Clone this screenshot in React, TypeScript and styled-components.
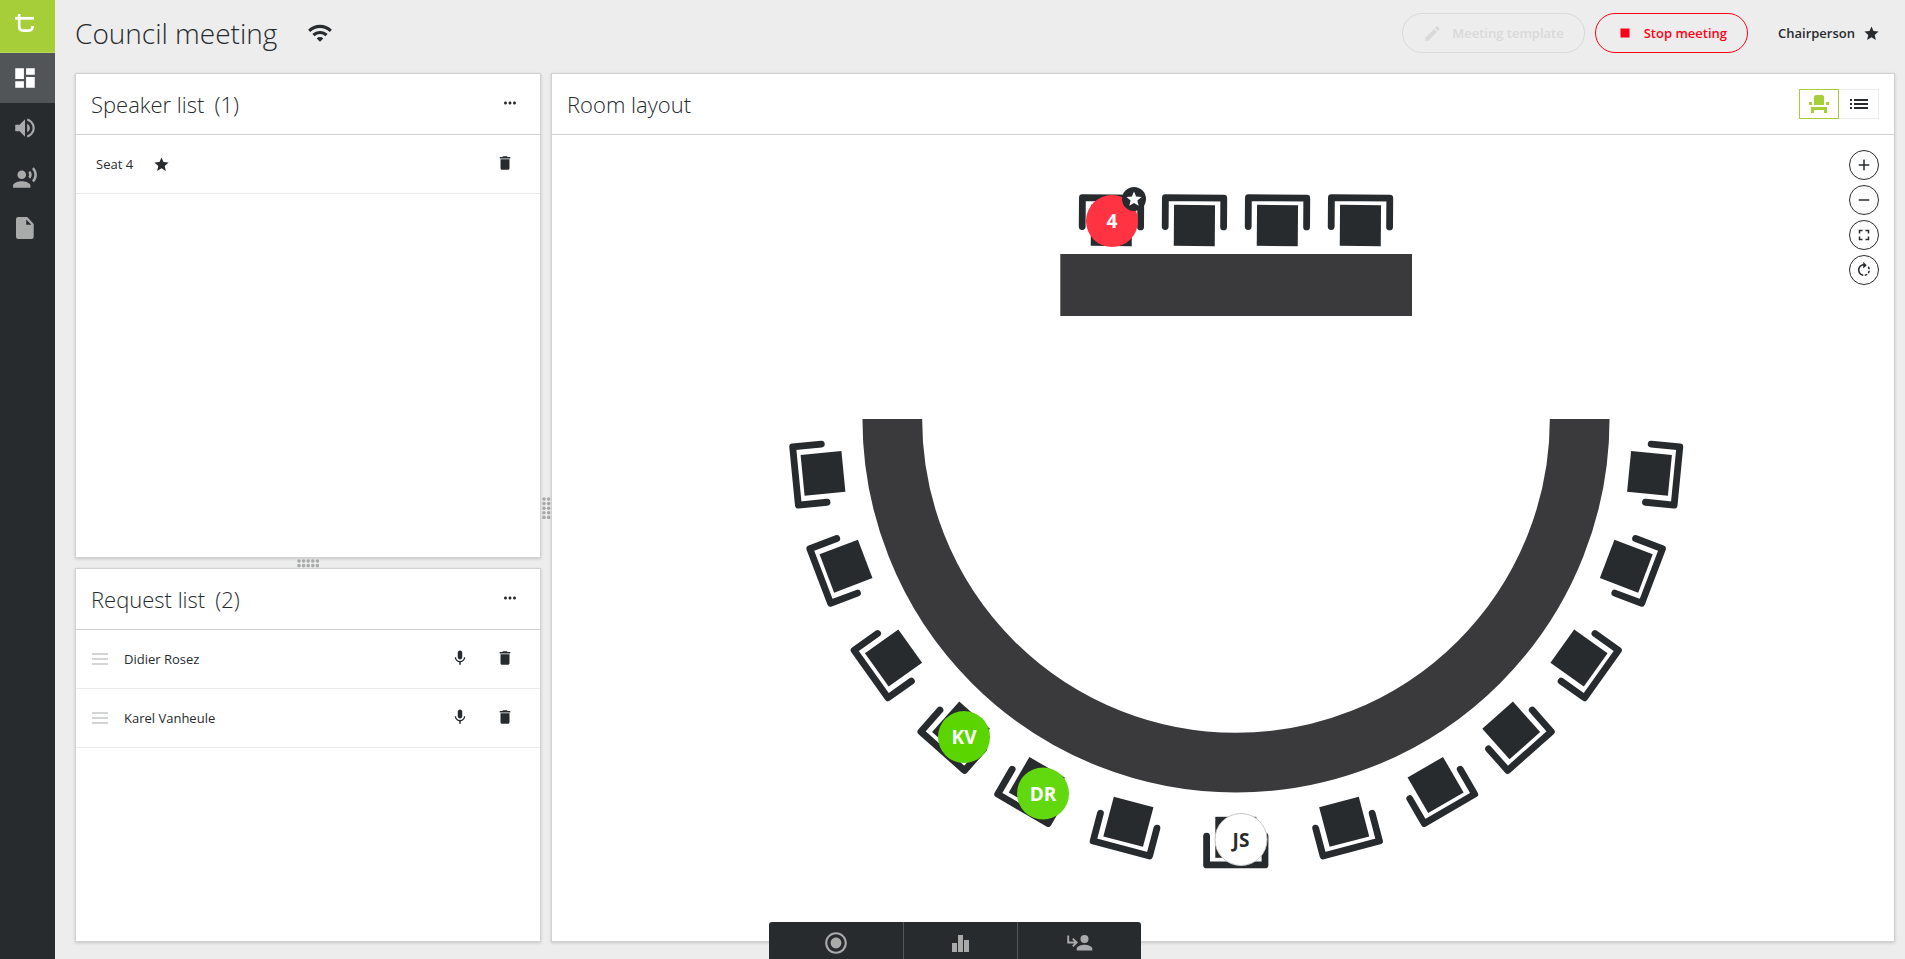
import React from "react";
import styled, { createGlobalStyle } from "styled-components";
import {
  MdAdd,
  MdDashboard,
  MdDelete,
  MdEdit,
  MdEventSeat,
  MdFullscreen,
  MdList,
  MdMic,
  MdMoreHoriz,
  MdRadioButtonChecked,
  MdRecordVoiceOver,
  MdRemove,
  MdRotateRight,
  MdStar,
  MdStop,
  MdVolumeUp,
  MdWifi,
} from "react-icons/md";

const ink = "#272b2e";
const line = "#d0d1d1";
const faint = "#ebebeb";
const green = "#a6ce39";
const red = "#ff0014";

const GlobalStyle = createGlobalStyle`
  * { box-sizing: border-box; }
  body {
    margin: 0;
    background: #ededed;
    color: ${ink};
    font-family: "Open Sans", "Noto Sans", sans-serif;
    font-size: 13px;
    line-height: 20px;
  }
  button { font: inherit; color: inherit; cursor: pointer; padding: 0; background: none; border: 0; }
  ul { list-style: none; margin: 0; padding: 0; }
  svg { display: block; }
`;

const Shell = styled.div`
  display: flex;
  min-height: 100vh;
`;

const Sidebar = styled.nav`
  width: 55px;
  flex: none;
  background: ${ink};
`;

const Logo = styled.a`
  display: flex;
  height: 53px;
  padding: 14px 15px;
  background: ${green};
  border-bottom: 1px solid #b8d861;
`;

const NavLink = styled.a<{ $active?: boolean }>`
  display: flex;
  align-items: center;
  justify-content: center;
  height: 50px;
  padding-right: 5px;
  color: ${(p) => (p.$active ? "#fff" : "#a9abab")};
  background: ${(p) => (p.$active ? "#525558" : "transparent")};
`;

const Main = styled.main`
  flex: 1;
  min-width: 0;
  display: flex;
  flex-direction: column;
  padding: 0 10px 17px 20px;
`;

const TopBar = styled.header`
  display: flex;
  align-items: center;
  height: 73px;
  padding-bottom: 7px;
`;

const PageTitle = styled.h1`
  margin: 0;
  font-size: 28px;
  line-height: 38px;
  font-weight: 300;
`;

const Signal = styled.span`
  margin-left: 30px;
`;

const Actions = styled.div`
  display: flex;
  align-items: center;
  gap: 10px;
  margin-left: auto;
`;

const PillButton = styled.button<{ $tone: string }>`
  display: flex;
  align-items: center;
  height: 40px;
  padding: 0 20px;
  gap: 10px;
  border: 1px solid ${(p) => p.$tone};
  border-radius: 20px;
  color: ${(p) => p.$tone};
  font-weight: 600;
`;

const Role = styled.div`
  display: flex;
  align-items: center;
  gap: 8px;
  margin: 0 15px 0 20px;
  font-weight: 600;
`;

const Workspace = styled.div`
  flex: 1;
  display: grid;
  grid-template-columns: 466px 10px minmax(0, 1fr);
`;

const Lists = styled.div`
  display: grid;
  grid-template-rows: 485fr 10px 374fr;
`;

const Panel = styled.section`
  display: flex;
  flex-direction: column;
  min-width: 0;
  background: #fff;
  border: 1px solid ${line};
  box-shadow: 0 1px 3px rgba(0, 0, 0, 0.16);
`;

const PanelHeader = styled.div`
  display: flex;
  align-items: center;
  justify-content: space-between;
  height: 61px;
  padding: 0 15px;
  border-bottom: 1px solid ${line};
`;

const PanelTitle = styled.h2`
  display: flex;
  gap: 10px;
  margin: 0;
  font-size: 22px;
  line-height: 30px;
  font-weight: 300;
`;

const IconButton = styled.button`
  display: flex;
  align-items: center;
  justify-content: center;
  width: 30px;
  height: 30px;
`;

const ListIconButton = styled(IconButton)`
  padding-bottom: 2px;
`;

const Row = styled.li`
  display: flex;
  align-items: center;
  height: 59px;
  padding: 0 20px 0 16px;
  border-bottom: 1px solid ${faint};
`;

const RowName = styled.span<{ $indent?: boolean }>`
  margin-left: ${(p) => (p.$indent ? "16px" : "4px")};
  margin-right: 20px;
`;

const RowActions = styled.div`
  display: flex;
  gap: 15px;
  margin-left: auto;
`;

const Gutter = styled.div`
  display: flex;
  align-items: center;
  justify-content: center;
`;

const ViewSwitch = styled.div`
  display: flex;
`;

const ViewButton = styled.button<{ $active?: boolean }>`
  display: flex;
  align-items: center;
  justify-content: center;
  width: 40px;
  height: 30px;
  border: 1px solid ${(p) => (p.$active ? green : faint)};
  border-left-width: ${(p) => (p.$active ? "1px" : "0")};
  color: ${(p) => (p.$active ? green : ink)};
`;

const Canvas = styled.div`
  position: relative;
  flex: 1;
  display: flex;
`;

const Room = styled.svg`
  flex: 1;
  width: 100%;
  min-width: 0;
`;

const TokenLabel = styled.text`
  font-size: 19px;
  font-weight: 700;
  text-anchor: middle;
`;

const MapTools = styled.div`
  position: absolute;
  top: 15px;
  right: 15px;
  display: flex;
  flex-direction: column;
  gap: 5px;
`;

const RoundButton = styled(IconButton)`
  border: 1px solid ${ink};
  border-radius: 50%;
  background: #fff;
`;

const Dock = styled.div`
  position: fixed;
  bottom: 0;
  left: 5px;
  right: 0;
  display: flex;
  justify-content: center;
  pointer-events: none;
`;

const DockButton = styled.button<{ $width: number }>`
  display: flex;
  align-items: center;
  justify-content: center;
  width: ${(p) => p.$width}px;
  height: 37px;
  padding-top: 5px;
  background: ${ink};
  color: #a9abab;
  pointer-events: auto;
  border-left: 1px solid #54575a;
  &:first-child { border-left: 0; border-top-left-radius: 3px; }
  &:last-child { border-top-right-radius: 3px; }
`;

function LogoMark() {
  return (
    <svg width="20" height="20" viewBox="0 0 20 20" fill="none" stroke="#fff" strokeWidth="2.7">
      <path d="M4.2 0V12.5Q4.2 16.6 8.3 16.6H13.5Q17.6 16.6 17.6 12.5V12" />
      <path d="M0 4.3H19" />
    </svg>
  );
}

function FileIcon() {
  return (
    <svg width="18" height="22" viewBox="0 0 18 22" fill="currentColor" fillRule="evenodd">
      <path d="M2.2 0H11.2L17.7 7V19.8Q17.7 22 15.5 22H2.2Q0 22 0 19.8V2.2Q0 0 2.2 0ZM10.2 2.6V7.8H15.4Z" />
    </svg>
  );
}

function DragLines() {
  return (
    <svg width="16" height="12" viewBox="0 0 16 12" fill="#d3d4d4">
      <path d="M0 0h16v2H0zM0 5h16v2H0zM0 10h16v2H0z" />
    </svg>
  );
}

function Grip({ vertical }: { vertical?: boolean }) {
  const dots: React.ReactNode[] = [];
  for (let a = 0; a < 5; a++)
    for (let b = 0; b < 2; b++) {
      const long = 2 + a * 4.6;
      const short = 2 + b * 4.6;
      dots.push(
        <circle key={`${a}-${b}`} cx={vertical ? short : long} cy={vertical ? long : short} r="1.8" />
      );
    }
  return (
    <svg width={vertical ? 9 : 22} height={vertical ? 22 : 9} fill="#a9abab">
      {dots}
    </svg>
  );
}

function BarsIcon() {
  return (
    <svg width="17" height="17" viewBox="0 0 17 17" fill="currentColor">
      <path d="M0 8h5v9H0zM6 0h5v17H6zM12 5h5v12h-5z" />
    </svg>
  );
}

function AssignIcon() {
  return (
    <svg width="26" height="16" viewBox="0 0 26 16" fill="none">
      <path d="M1.2 0.5V7.5H9M5.8 3.7L9.6 7.5L5.8 11.3" stroke="currentColor" strokeWidth="1.9" />
      <circle cx="17.5" cy="4" r="4" fill="currentColor" />
      <path d="M9.7 15.5v-1.9c0-2.6 5.2-3.9 7.8-3.9s7.8 1.3 7.8 3.9v1.9z" fill="currentColor" />
    </svg>
  );
}

const seats = [
  { x: 1111.4, y: 225.5, turn: 180.4 },
  { x: 1194.4, y: 225.5, turn: 180.4 },
  { x: 1277.4, y: 225.5, turn: 180.4 },
  { x: 1360.4, y: 225.5, turn: 180.4 },
  { x: 823, y: 473.3, turn: 84.4 },
  { x: 846, y: 566.2, turn: 69.2 },
  { x: 893.5, y: 658, turn: 54.6 },
  { x: 961, y: 730.4, turn: 41.6 },
  { x: 1036.8, y: 785, turn: 30.2 },
  { x: 1128.4, y: 821.8, turn: 14.8 },
  { x: 1235.8, y: 837.3, turn: 0 },
  { x: 1344.2, y: 821.8, turn: -14.8 },
  { x: 1435.6, y: 785, turn: -30.2 },
  { x: 1511.2, y: 730.4, turn: -41.6 },
  { x: 1579, y: 658, turn: -54.6 },
  { x: 1626.3, y: 566.2, turn: -69.2 },
  { x: 1649.5, y: 473.3, turn: -84.4 },
];

const tokens = [
  { label: "4", x: 1112, y: 221, fill: "#ff3341", color: "#fff", chair: true },
  { label: "KV", x: 964, y: 737, fill: "#5bd500", color: "#fff" },
  { label: "DR", x: 1043, y: 793.5, fill: "#62d80e", color: "#fff" },
  { label: "JS", x: 1241, y: 839.5, fill: "#fff", color: ink, ring: "#c8c8c8" },
];

function RoomMap() {
  return (
    <Room viewBox="552 135 1342 806" role="img" aria-label="Room layout">
      <rect x="1060.3" y="254" width="351.7" height="62" fill="#3a393b" />
      <path d="M892.3 419A343.7 343.7 0 0 0 1579.7 419" fill="none" stroke="#3a393b" strokeWidth="59.7" />
      {seats.map((s) => (
        <g key={`${s.x}-${s.y}`} transform={`translate(${s.x} ${s.y}) rotate(${s.turn})`}>
          <rect x="-20.5" y="-20.5" width="41" height="41" fill={ink} />
          <path
            d="M-29.2 -1.2V27.6H29.2V-1.2"
            fill="none"
            stroke={ink}
            strokeWidth="6.8"
            strokeLinecap="round"
            strokeLinejoin="round"
          />
        </g>
      ))}
      {tokens.map((t) => (
        <g key={t.label}>
          <circle cx={t.x} cy={t.y} r="26" fill={t.fill} stroke={t.ring} />
          <TokenLabel x={t.x} y={t.y + 7} fill={t.color}>
            {t.label}
          </TokenLabel>
          {t.chair && (
            <>
              <circle cx={t.x + 22} cy={t.y - 22} r="12" fill={ink} />
              <MdStar x={t.x + 13} y={t.y - 31} size={18} color="#fff" />
            </>
          )}
        </g>
      ))}
    </Room>
  );
}

function ListHeader({ title, count }: { title: string; count: number }) {
  return (
    <PanelHeader>
      <PanelTitle>
        <span>{title}</span>
        <span>({count})</span>
      </PanelTitle>
      <ListIconButton aria-label={`${title} options`}>
        <MdMoreHoriz size={18} />
      </ListIconButton>
    </PanelHeader>
  );
}

const requests = ["Didier Rosez", "Karel Vanheule"];

export default function App() {
  return (
    <>
      <GlobalStyle />
      <Shell>
        <Sidebar aria-label="Main">
          <Logo href="#" aria-label="Home">
            <LogoMark />
          </Logo>
          <NavLink href="#" $active aria-label="Dashboard">
            <MdDashboard size={26} />
          </NavLink>
          <NavLink href="#" aria-label="Audio">
            <MdVolumeUp size={26} />
          </NavLink>
          <NavLink href="#" aria-label="Speakers">
            <MdRecordVoiceOver size={26} />
          </NavLink>
          <NavLink href="#" aria-label="Documents">
            <FileIcon />
          </NavLink>
        </Sidebar>
        <Main>
          <TopBar>
            <PageTitle>Council meeting</PageTitle>
            <Signal>
              <MdWifi size={26} />
            </Signal>
            <Actions>
              <PillButton $tone="#d8d9d9" disabled>
                <MdEdit size={19} />
                Meeting template
              </PillButton>
              <PillButton $tone={red}>
                <MdStop size={18} />
                Stop meeting
              </PillButton>
              <Role>
                Chairperson
                <MdStar size={17} />
              </Role>
            </Actions>
          </TopBar>
          <Workspace>
            <Lists>
              <Panel>
                <ListHeader title="Speaker list" count={1} />
                <ul>
                  <Row>
                    <RowName>Seat 4</RowName>
                    <MdStar size={17} />
                    <RowActions>
                      <ListIconButton aria-label="Remove Seat 4">
                        <MdDelete size={18} />
                      </ListIconButton>
                    </RowActions>
                  </Row>
                </ul>
              </Panel>
              <Gutter>
                <Grip />
              </Gutter>
              <Panel>
                <ListHeader title="Request list" count={2} />
                <ul>
                  {requests.map((name) => (
                    <Row key={name}>
                      <DragLines />
                      <RowName $indent>{name}</RowName>
                      <RowActions>
                        <ListIconButton aria-label={`Give ${name} the floor`}>
                          <MdMic size={18} />
                        </ListIconButton>
                        <ListIconButton aria-label={`Remove ${name}`}>
                          <MdDelete size={18} />
                        </ListIconButton>
                      </RowActions>
                    </Row>
                  ))}
                </ul>
              </Panel>
            </Lists>
            <Gutter>
              <Grip vertical />
            </Gutter>
            <Panel>
              <PanelHeader>
                <PanelTitle>Room layout</PanelTitle>
                <ViewSwitch>
                  <ViewButton $active aria-label="Seat view">
                    <MdEventSeat size={24} />
                  </ViewButton>
                  <ViewButton aria-label="List view">
                    <MdList size={24} />
                  </ViewButton>
                </ViewSwitch>
              </PanelHeader>
              <Canvas>
                <RoomMap />
                <MapTools>
                  <RoundButton aria-label="Zoom in">
                    <MdAdd size={18} />
                  </RoundButton>
                  <RoundButton aria-label="Zoom out">
                    <MdRemove size={18} />
                  </RoundButton>
                  <RoundButton aria-label="Fit to screen">
                    <MdFullscreen size={18} />
                  </RoundButton>
                  <RoundButton aria-label="Rotate">
                    <MdRotateRight size={18} />
                  </RoundButton>
                </MapTools>
              </Canvas>
            </Panel>
          </Workspace>
        </Main>
      </Shell>
      <Dock>
        <DockButton $width={134} aria-label="Record">
          <MdRadioButtonChecked size={26} />
        </DockButton>
        <DockButton $width={114} aria-label="Voting">
          <BarsIcon />
        </DockButton>
        <DockButton $width={124} aria-label="Assign speaker">
          <AssignIcon />
        </DockButton>
      </Dock>
    </>
  );
}
